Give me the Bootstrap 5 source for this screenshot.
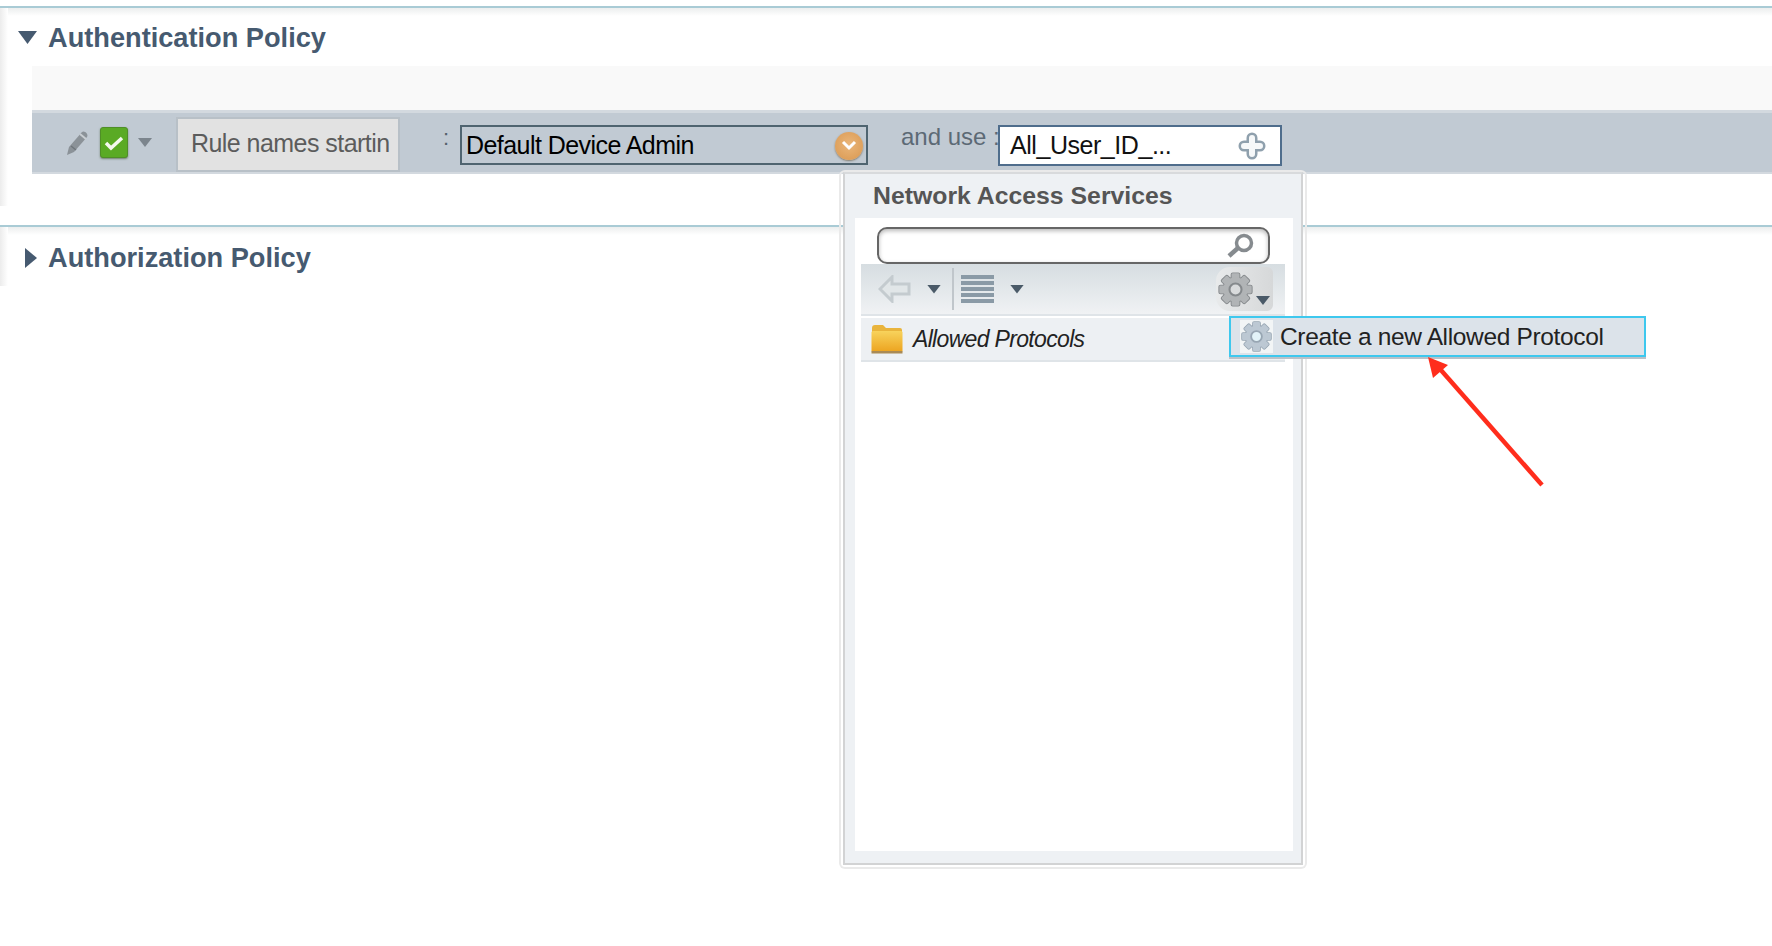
<!DOCTYPE html>
<html lang="en">
<head>
<meta charset="utf-8">
<title>Policy</title>
<link href="https://cdn.jsdelivr.net/npm/bootstrap@5.3.0/dist/css/bootstrap.min.css" rel="stylesheet">
<style>
html,body{height:100%;}
body{background:#fff;font-family:"Liberation Sans",Arial,sans-serif;color:#222;position:relative;overflow:hidden;min-height:946px;}
.pol-sec{border-top:2px solid #a9cbd5;background:linear-gradient(#eceeee,#fff) top/100% 8px no-repeat;}
.pol-first{margin-top:6px;height:219px;}
.pol-second{height:90px;}
.pol-gut{background:linear-gradient(to right,#ececec,#fff) left/8px 100% no-repeat;}
.pol-first .pol-gut{height:198px;}
.pol-second .pol-gut{height:59px;}
.pol-head{height:58px;padding:1px 0 0 18px;}
.pol-second .pol-head{height:59px;padding:3px 0 0 25px;}
.pol-title{font-size:27.2px;font-weight:700;color:#465a70;margin:0;line-height:1;}
.pol-first .pol-title{margin-left:11px;}
.pol-second .pol-title{margin-left:11px;}
.tri-down{width:19px;height:13px;background:#465a70;clip-path:polygon(0 0,100% 0,50% 100%);}
.tri-right{width:12px;height:20px;background:#465a70;clip-path:polygon(0 0,100% 50%,0 100%);}
.pol-band{margin-left:32px;height:44px;background:#f9f9f9;}
.pol-row{margin-left:32px;height:64px;background:#c1cad3;border-top:3px solid #d3d9df;border-bottom:2px solid #d3d9df;padding-left:34px;}
.sm-caret{display:block;width:14px;height:9px;background:#7c858d;clip-path:polygon(0 0,100% 0,50% 100%);}
.sm-dark{background:#4a5a68;}
.chk-caret{margin-left:10px;}
.chk-box{width:28px;height:31px;border-radius:3px;background:#5aaa24;border:1px solid #4f8f27;box-shadow:0 1px 2px rgba(60,80,40,.6);margin-left:10px;}
.rule-box{width:224px;height:55px;background:#e2e2e2;border:2px solid #b8c0c7;font-size:25px;letter-spacing:-.55px;color:#5c5c5c;padding:0 0 2px 13px;margin-left:24px;margin-top:4px;white-space:nowrap;}
.rule-colon{font-size:22px;color:#55626c;margin-left:43px;margin-top:-10px;width:17px;}
.sel-box{width:408px;height:40px;border:2px solid #4f6470;font-size:25px;letter-spacing:-.56px;color:#000;padding:2px 0 0 4px;margin-top:4px;}
.sel-go{width:28px;height:28px;border-radius:50%;background:radial-gradient(circle at 50% 45%,#eab67a,#d9974f);box-shadow:0 1px 2px rgba(90,70,40,.6);margin-right:3px;}
.and-use{font-size:24px;color:#5c6975;margin-left:33px;margin-top:-11px;width:97px;white-space:nowrap;}
.id-box{width:284px;height:41px;background:#fff;border:2px solid #4f6d8c;font-size:25px;letter-spacing:-.45px;color:#111;padding-left:10px;padding-right:14px;margin-top:6px;}
.nas-panel{position:absolute;left:841px;top:172px;width:464px;height:695px;border-radius:4px;box-shadow:0 0 0 2px #eaeaea;padding:0 2px 2px;}
.nas-in{height:100%;background:#eef1f4;border:2px solid #d2d3d4;border-top-color:#d8dadc;display:flex;flex-direction:column;padding:0 8px 12px 10px;}
.nas-title{height:44px;font-size:24.8px;font-weight:700;color:#555;padding-left:18px;flex:none;}
.nas-white{background:#fff;flex:1;padding:9px 8px 0 6px;}
.nas-search{height:37px;margin:0 15px 0 16px;border:2px solid #666;border-radius:10px;box-shadow:inset 0 2px 4px rgba(0,0,0,.28);padding-right:14px;}
.nas-bar{height:52px;background:linear-gradient(#d6dde1,#f0f2f4);border-bottom:2px solid #dfe4e8;padding-left:17px;}
.nas-div{width:2px;height:42px;background:#c0c6cb;margin:0 7px 0 11px;}
.gear-btn{width:57px;height:44px;border-radius:14px 6px 6px 14px;background:linear-gradient(to right,#e8eaeb,#d6d8d9);margin-right:12px;position:relative;padding:4px 0 0 1px;}
.gear-btn .sm-caret{position:absolute;right:3px;bottom:6px;}
.nas-list{margin-top:2px;height:44px;background:#edf0f3;border-bottom:2px solid #dfe4e8;padding-left:10px;font-size:23px;font-style:italic;color:#222;letter-spacing:-.67px;}
.list-txt{margin-left:2px;}
.menu-it{position:absolute;left:1229px;top:316px;width:417px;height:41px;background:#dce3ea;border:2.5px solid #3ec8ee;box-shadow:0 2px 0 #b9c1c8;font-size:24.5px;letter-spacing:-.35px;color:#222;padding-left:9px;white-space:nowrap;}
.menu-lbl{padding-top:2px;}
.menu-ic{background:#f2f5f6;width:33px;height:33px;margin-right:7px;}
.gear-gray{color:#b1b4b6;--edge:#85898c;--hole:#d9dbdc;}
.gear-blue{color:#bcc8d3;--edge:#98a6b3;--hole:#e3f3f8;}
.red-arrow{position:absolute;left:1420px;top:350px;}
</style>
</head>
<body>
<svg width="0" height="0" class="position-absolute">
  <defs>
    <g id="gear-shape">
      <rect x="12.6" y="2" width="6.8" height="28" rx="1"/>
      <rect x="12.6" y="2" width="6.8" height="28" rx="1" transform="rotate(45 16 16)"/>
      <rect x="12.6" y="2" width="6.8" height="28" rx="1" transform="rotate(90 16 16)"/>
      <rect x="12.6" y="2" width="6.8" height="28" rx="1" transform="rotate(135 16 16)"/>
      <circle cx="16" cy="16" r="10.5"/>
    </g>
    <symbol id="gear" viewBox="0 0 32 32">
      <use href="#gear-shape" fill="var(--edge)" stroke="var(--edge)" stroke-width="1.6"/>
      <use href="#gear-shape" fill="currentColor"/>
      <circle cx="16" cy="16" r="5.2" fill="var(--hole)" stroke="var(--edge)" stroke-width="1.8"/>
    </symbol>
  </defs>
</svg>

<section class="pol-sec pol-first">
  <div class="pol-gut">
    <div class="pol-head d-flex align-items-center">
      <span class="tri-down"></span>
      <h2 class="pol-title">Authentication Policy</h2>
    </div>
    <div class="pol-band"></div>
    <div class="pol-row d-flex align-items-center">
      <svg width="24" height="26" viewBox="0 0 24 26"><path d="M1 25l2-8L16 2c2-2 7 2 5 5L8 22z" fill="#8b9298"/><path d="M14 4l6 5" stroke="#c9ced2" stroke-width="2"/><path d="M5 16l5 4" stroke="#6e757b" stroke-width="1.5"/></svg>
      <span class="chk-box d-flex align-items-center justify-content-center">
        <svg width="20" height="16" viewBox="0 0 20 16"><path d="M2 8l5 5L18 3" fill="none" stroke="#f4f8ee" stroke-width="3.5"/></svg>
      </span>
      <span class="sm-caret chk-caret"></span>
      <div class="rule-box d-flex align-items-center">Rule names startin</div>
      <span class="rule-colon">:</span>
      <div class="sel-box d-flex align-items-center justify-content-between">
        <span>Default Device Admin</span>
        <span class="sel-go d-flex align-items-center justify-content-center">
          <svg width="16" height="11" viewBox="0 0 16 11"><path d="M2 2l6 6 6-6" fill="none" stroke="#fff" stroke-width="3"/></svg>
        </span>
      </div>
      <span class="and-use">and use :</span>
      <div class="id-box d-flex align-items-center justify-content-between">
        <span>All_User_ID_...</span>
        <svg width="28" height="28" viewBox="0 0 28 28"><path d="M14 6v16M6 14h16" stroke="#8fa0ad" stroke-width="11" stroke-linecap="round"/><path d="M14 6v16M6 14h16" stroke="#f6f8f9" stroke-width="6" stroke-linecap="round"/></svg>
      </div>
    </div>
  </div>
</section>

<section class="pol-sec pol-second">
  <div class="pol-gut">
    <div class="pol-head d-flex align-items-center">
      <span class="tri-right"></span>
      <h2 class="pol-title">Authorization Policy</h2>
    </div>
  </div>
</section>

<div class="nas-panel">
  <div class="nas-in">
    <div class="nas-title d-flex align-items-center">Network Access Services</div>
    <div class="nas-white">
      <div class="nas-search d-flex align-items-center justify-content-end">
        <svg width="28" height="26" viewBox="0 0 28 26"><circle cx="18" cy="10" r="7.5" fill="#fff" stroke="#868b8f" stroke-width="3.5"/><path d="M12 15l-9 8" stroke="#868b8f" stroke-width="4.5"/></svg>
      </div>
      <div class="nas-bar d-flex align-items-center">
        <svg width="33" height="28" viewBox="0 0 33 28"><path d="M14 2L2 14l12 12v-7h17V9H14z" fill="#e1e6e8" stroke="#c4cbcf" stroke-width="3"/></svg>
        <span class="sm-caret sm-dark ms-3"></span>
        <span class="nas-div"></span>
        <svg width="33" height="28" viewBox="0 0 33 28"><path d="M0 2h33M0 8h33M0 14h33M0 20h33M0 26h33" stroke="#8a9aa6" stroke-width="4.2"/></svg>
        <span class="sm-caret sm-dark ms-3"></span>
        <div class="gear-btn ms-auto">
          <svg width="37" height="37" class="gear-gray d-block"><use href="#gear"/></svg>
          <span class="sm-caret sm-dark"></span>
        </div>
      </div>
      <div class="nas-list d-flex align-items-center">
        <svg width="32" height="30" viewBox="0 0 32 30" class="me-2">
          <defs><linearGradient id="fold" x1="0" y1="0" x2="0" y2="1"><stop offset="0" stop-color="#f8d35c"/><stop offset="1" stop-color="#eca31f"/></linearGradient></defs>
          <path d="M1 4q0-3 3-3h8l3 3h14q2 0 2 2v4H1z" fill="#e9b43c"/>
          <rect x="0.5" y="7" width="31" height="21" rx="1.5" fill="url(#fold)"/>
          <rect x="0.5" y="27" width="31" height="2.5" fill="#a98a55"/>
        </svg>
        <span class="list-txt">Allowed Protocols</span>
      </div>
    </div>
  </div>
</div>

<div class="menu-it d-flex align-items-center">
  <span class="menu-ic d-flex align-items-center justify-content-center">
    <svg width="33" height="33" class="gear-blue"><use href="#gear"/></svg>
  </span>
  <span class="menu-lbl">Create a new Allowed Protocol</span>
</div>

<svg class="red-arrow" width="130" height="140" viewBox="0 0 130 140">
  <path d="M122 135L20 19" stroke="#ff2d1c" stroke-width="4.5" fill="none"/>
  <path d="M8 7L28 15 13 28z" fill="#ff2d1c"/>
</svg>

<script src="https://cdn.jsdelivr.net/npm/bootstrap@5.3.0/dist/js/bootstrap.bundle.min.js"></script>
</body>
</html>
